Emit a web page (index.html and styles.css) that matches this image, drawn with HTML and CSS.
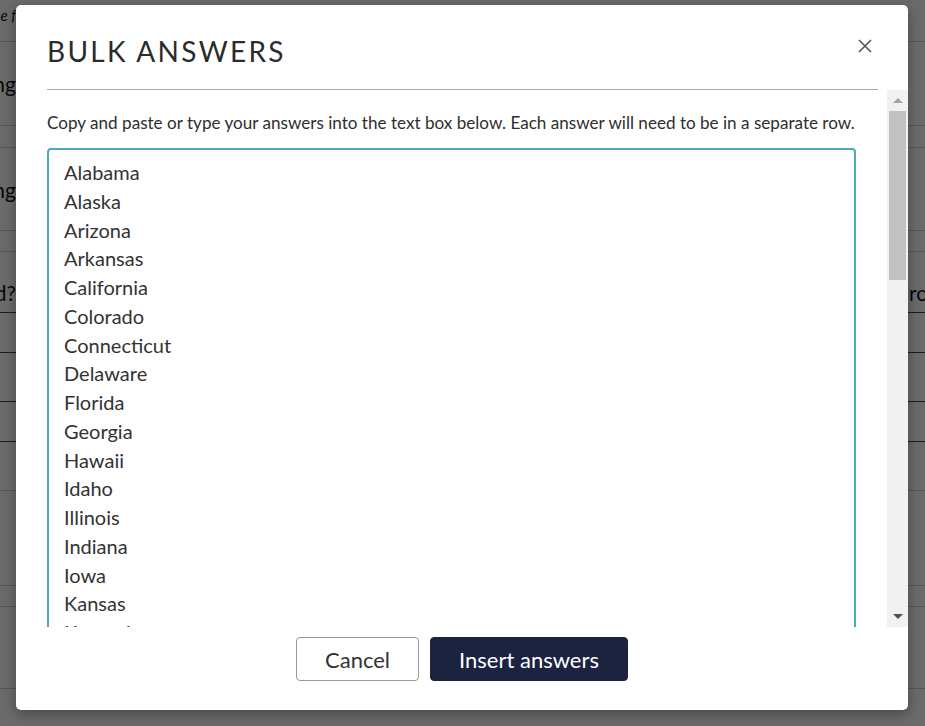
FILE: index.html
```html
<!DOCTYPE html>
<html lang="en">
<head>
<meta charset="utf-8">
<title>Bulk answers</title>
<link rel="stylesheet" href="styles.css">
</head>
<body>
<div class="page">
  <div class="row ra light"><span class="cut italic">e f</span><span></span><span></span></div>
  <div class="row rb light"><span class="cut">ng</span><span></span><span></span></div>
  <div class="row rc light"><span></span><span></span><span></span></div>
  <div class="row rd light"><span class="cut">ng</span><span></span><span></span></div>
  <div class="row re light"><span></span><span></span><span></span></div>
  <div class="row rf dark"><span class="cut">d?</span><span></span><span class="rfrag">ro</span></div>
  <div class="row rg dark"><span></span><span></span><span></span></div>
  <div class="row rh dark"><span></span><span></span><span></span></div>
  <div class="row ri dark"><span></span><span></span><span></span></div>
  <div class="row rj light"><span></span><span></span><span></span></div>
  <div class="row rk light"><span></span><span></span><span></span></div>
  <div class="row rl light"><span></span><span></span><span></span></div>
  <div class="row rm light"><span></span><span></span><span></span></div>
</div>
<div class="overlay"></div>

<div class="modal" role="dialog" aria-labelledby="bulk-title">
  <div class="modal-header">
    <h2 id="bulk-title" class="modal-title">BULK ANSWERS</h2>
    <button class="close" aria-label="Close">
      <svg width="14" height="14" viewBox="0 0 14 14" aria-hidden="true"><path d="M1 1 L13 13 M13 1 L1 13" stroke="#555" stroke-width="1.6" fill="none"/></svg>
    </button>
  </div>
  <div class="modal-scroll">
    <div class="modal-body">
      <p class="hint">Copy and paste or type your answers into the text box below. Each answer will need to be in a separate row.</p>
      <div class="answers" role="textbox" aria-multiline="true">
        <div>Alabama</div><div>Alaska</div><div>Arizona</div><div>Arkansas</div><div>California</div>
        <div>Colorado</div><div>Connecticut</div><div>Delaware</div><div>Florida</div><div>Georgia</div>
        <div>Hawaii</div><div>Idaho</div><div>Illinois</div><div>Indiana</div><div>Iowa</div>
        <div>Kansas</div><div>Kentucky</div><div>Louisiana</div><div>Maine</div><div>Maryland</div>
      </div>
    </div>
    <div class="scrollbar" aria-hidden="true">
      <div class="sb-btn"><span class="tri-up"></span></div>
      <div class="sb-track"><div class="sb-thumb"></div></div>
      <div class="sb-btn"><span class="tri-down"></span></div>
    </div>
  </div>
  <div class="modal-footer">
    <button class="btn btn-cancel">Cancel</button>
    <button class="btn btn-primary">Insert answers</button>
  </div>
</div>
</body>
</html>
```

FILE: styles.css
```css
* { box-sizing: border-box; }
html, body { margin: 0; padding: 0; }
body {
  width: 925px;
  height: 726px;
  overflow: hidden;
  position: relative;
  font-family: Lato, "Noto Sans", sans-serif;
  background: #fff;
  color: #333;
}

/* background page */
.page {
  display: flex;
  flex-direction: column;
  width: 925px;
  height: 726px;
  overflow: hidden;
}
.row {
  display: grid;
  grid-template-columns: 16px 1fr 17px;
  align-items: center;
  border-bottom: 1px solid #d0d0d0;
  font-size: 21px;
  color: #111;
  flex: none;
}
.row.dark { border-bottom-color: #444; }
.ra { height: 42px; }
.rb { height: 84px; }
.rc { height: 22px; }
.rd { height: 83px; }
.re { height: 21px; }
.rf { height: 61px; padding-top: 20px; }
.rg { height: 40px; }
.rh { height: 49px; }
.ri { height: 40px; }
.rj { height: 49px; }
.rk { height: 95px; }
.rl { height: 21px; }
.rm { height: 82px; }
.cut {
  display: flex;
  justify-content: flex-end;
  white-space: nowrap;
}
.italic { font-style: italic; font-size: 15px; align-self: start; padding-top: 6px; }
.rfrag { white-space: nowrap; padding-left: 1px; }

.overlay {
  position: absolute;
  inset: 0;
  background: rgba(0, 0, 0, 0.58);
}

/* modal */
.modal {
  position: absolute;
  left: 16px;
  top: 5px;
  width: 892px;
  height: 705px;
  background: #fff;
  border-radius: 5px;
  box-shadow: 0 4px 14px rgba(0, 0, 0, 0.35);
  display: flex;
  flex-direction: column;
  overflow: hidden;
}
.modal-header {
  height: 85px;
  margin: 0 30px 0 31px;
  border-bottom: 1px solid #ababab;
  display: flex;
  align-items: flex-start;
  justify-content: space-between;
  flex: none;
}
.modal-title {
  margin: 28px 0 0;
  font-size: 28px;
  line-height: 36px;
  font-weight: 400;
  letter-spacing: 2.3px;
  color: #2b2b2b;
}
.close {
  margin: 28px 0 0;
  width: 26px;
  height: 26px;
  padding: 0;
  border: 0;
  background: transparent;
  display: flex;
  align-items: center;
  justify-content: center;
}

.modal-scroll {
  height: 537px;
  flex: none;
  display: flex;
  overflow: hidden;
}
.modal-body {
  flex: 1;
  padding: 0 31px;
  overflow: hidden;
}
.hint {
  margin: 21px 0 13px;
  font-size: 17.1px;
  line-height: 24px;
  color: #2e2e2e;
  white-space: nowrap;
}
.answers {
  border: 2px solid #4fa9bd;
  border-radius: 4px;
  padding: 8px 15px;
  font-size: 20px;
  line-height: 28.75px;
  color: #333;
}

.scrollbar {
  width: 21px;
  flex: none;
  background: #f1f1f1;
  display: flex;
  flex-direction: column;
}
.sb-btn {
  height: 21px;
  flex: none;
  display: flex;
  align-items: center;
  justify-content: center;
}
.tri-up, .tri-down {
  width: 0;
  height: 0;
  border-left: 5px solid transparent;
  border-right: 5px solid transparent;
}
.tri-up { border-bottom: 5px solid #a3a3a3; }
.tri-down { border-top: 5px solid #505050; }
.sb-track { flex: 1; padding: 0 2px; }
.sb-thumb { height: 169px; background: #c1c1c1; }

.modal-footer {
  flex: 1;
  display: flex;
  justify-content: center;
  align-items: flex-start;
  gap: 11px;
  padding-top: 10px;
}
.btn {
  height: 44px;
  padding: 0 28px;
  font-family: Lato, "Noto Sans", sans-serif;
  font-size: 22px;
  border-radius: 4px;
  cursor: pointer;
}
.btn-cancel {
  background: #fff;
  color: #333;
  border: 1px solid #999;
}
.btn-primary {
  background: #1b2341;
  color: #fff;
  border: 1px solid #1b2341;
}
```
